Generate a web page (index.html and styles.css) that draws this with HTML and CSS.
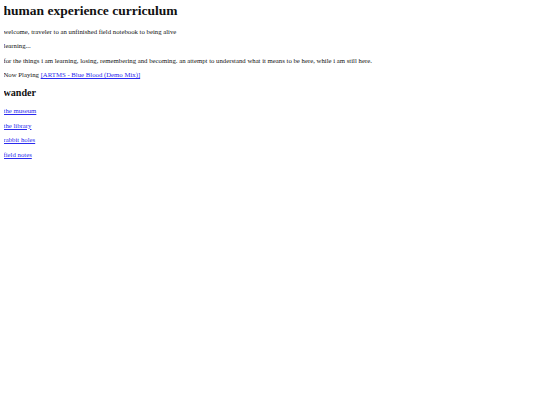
FILE: index.html
```html
<!DOCTYPE html>
<html>
<head>
<meta charset="utf-8">
<title>human experience curriculum</title>
<link rel="stylesheet" href="styles.css">
</head>
<body class="page">
<h1 class="title">human experience curriculum</h1>
<p class="line">welcome, traveler to an unfinished field notebook to being alive</p>
<p class="line">learning...</p>
<p class="line">for the things i am learning, losing, remembering and becoming. an attempt to understand what it means to be here, while i am still here.</p>
<p class="line">Now Playing <a class="link" href="#">[ARTMS - Blue Blood (Demo Mix)]</a></p>
<h2 class="subtitle">wander</h2>
<p class="line"><a class="link" href="#">the museum</a></p>
<p class="line"><a class="link" href="#">the library</a></p>
<p class="line"><a class="link" href="#">rabbit holes</a></p>
<p class="line"><a class="link" href="#">field notes</a></p>
</body>
</html>
```
FILE: styles.css
```css
.page {
  margin: 3px 3.5px;
  font-family: "Liberation Serif", "Times New Roman", serif;
  font-size: 6.75px;
  color: #111;
  background: #fff;
}
.title {
  font-size: 13.5px;
  line-height: 15.5px;
  margin: 0 0 9px;
}
.line {
  line-height: 7.75px;
  margin: 6.75px 0;
}
.subtitle {
  font-size: 10.125px;
  line-height: 11.65px;
  margin: 8.4px 0;
}
.link {
  color: #2a2aee;
}
```
